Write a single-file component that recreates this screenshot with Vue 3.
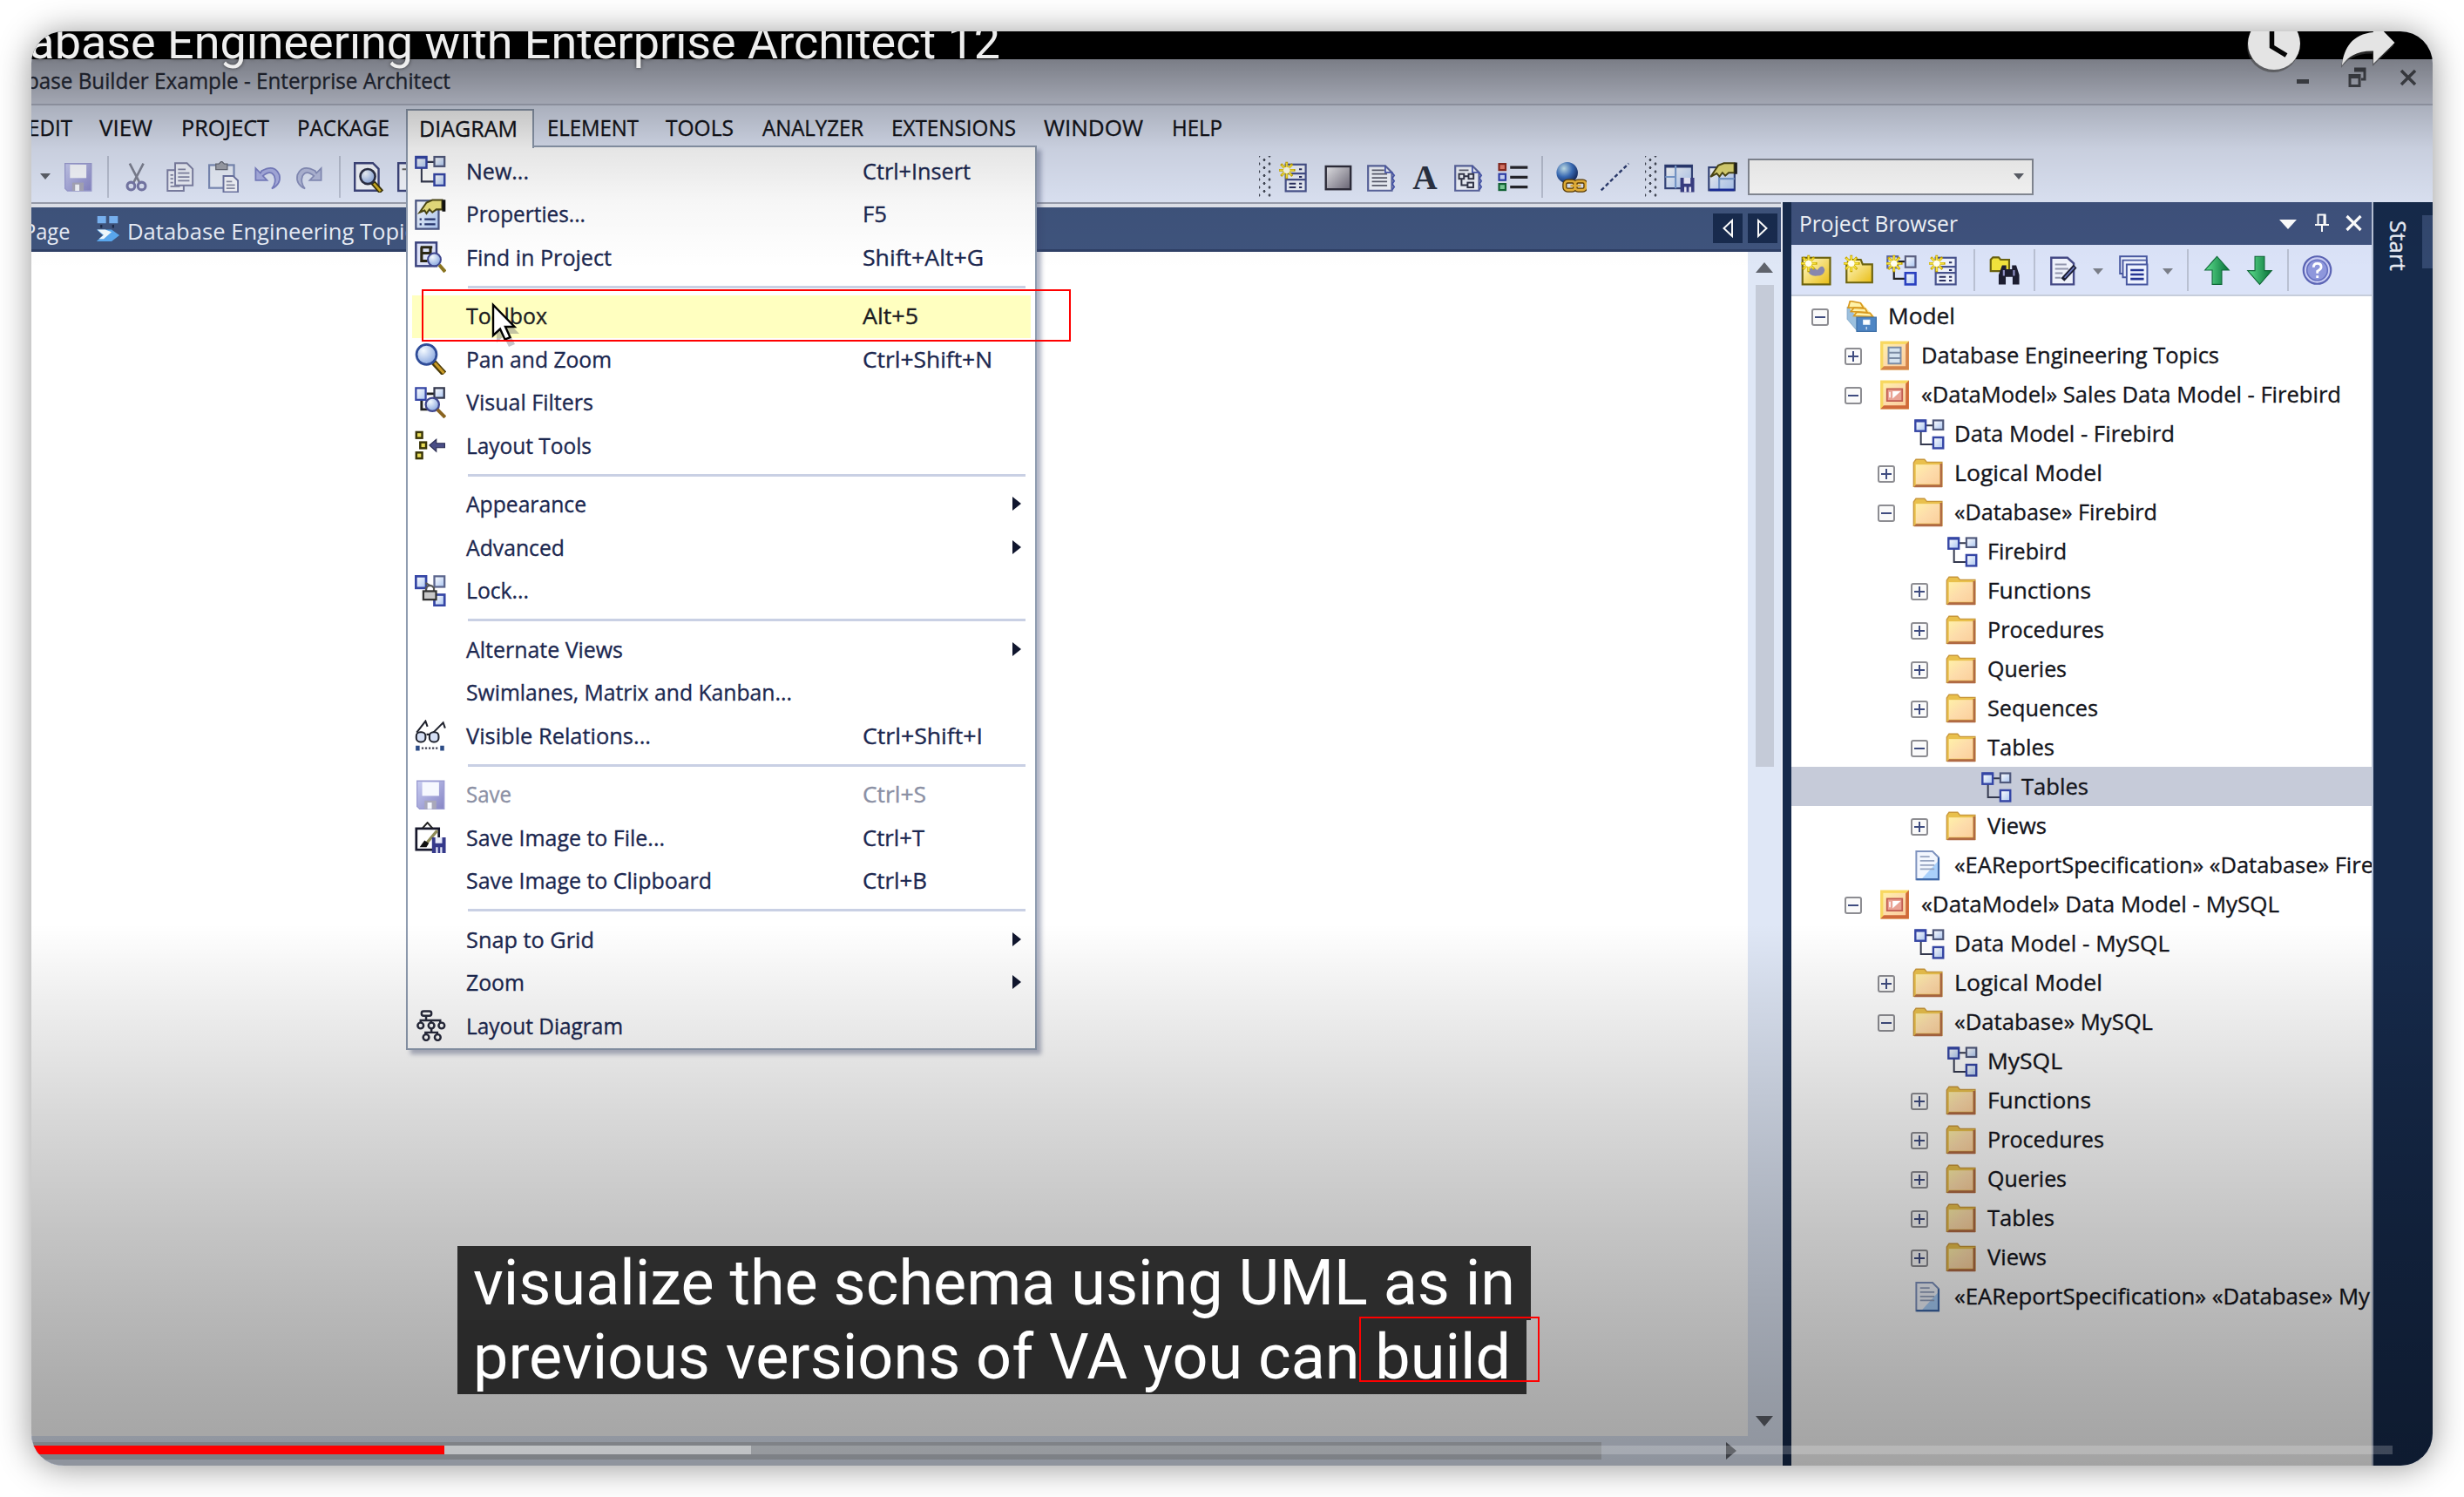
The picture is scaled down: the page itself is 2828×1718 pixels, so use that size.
<script setup>
const vFit = {
  mounted(el, { value }) {
    if (!value) return
    const w = el.getBoundingClientRect().width
    el.style.transform = `scaleX(${value / w})`
  },
}

const menus = [
  { t: 'EDIT', cell: 82, w: 51 },
  { t: 'VIEW', cell: 94, w: 61 },
  { t: 'PROJECT', cell: 133, w: 101 },
  { t: 'PACKAGE', cell: 139, w: 106 },
  { t: 'DIAGRAM', cell: 147, w: 113 },
  { t: 'ELEMENT', cell: 136, w: 105 },
  { t: 'TOOLS', cell: 111, w: 78 },
  { t: 'ANALYZER', cell: 148, w: 116 },
  { t: 'EXTENSIONS', cell: 175, w: 143 },
  { t: 'WINDOW', cell: 147, w: 114 },
  { t: 'HELP', cell: 90, w: 58 },
]

const items = [
  { t: 'New...', w: 72, k: 'Ctrl+Insert', kw: 124, icon: 'diagram' },
  { t: 'Properties...', w: 137, k: 'F5', kw: 28, icon: 'props' },
  { t: 'Find in Project', w: 167, k: 'Shift+Alt+G', kw: 139, icon: 'findproj' },
  { sep: true },
  { t: 'Toolbox', w: 93, k: 'Alt+5', kw: 64, hot: true },
  { t: 'Pan and Zoom', w: 167, k: 'Ctrl+Shift+N', kw: 149, icon: 'zoom' },
  { t: 'Visual Filters', w: 146, icon: 'filters' },
  { t: 'Layout Tools', w: 144, icon: 'align' },
  { sep: true },
  { t: 'Appearance', w: 138, sub: true },
  { t: 'Advanced', w: 113, sub: true },
  { t: 'Lock...', w: 72, icon: 'lock' },
  { sep: true },
  { t: 'Alternate Views', w: 180, sub: true },
  { t: 'Swimlanes, Matrix and Kanban...', w: 374 },
  { t: 'Visible Relations...', w: 212, k: 'Ctrl+Shift+I', kw: 138, icon: 'glasses' },
  { sep: true },
  { t: 'Save', w: 52, k: 'Ctrl+S', kw: 73, icon: 'save', off: true },
  { t: 'Save Image to File...', w: 228, k: 'Ctrl+T', kw: 71, icon: 'saveimg' },
  { t: 'Save Image to Clipboard', w: 282, k: 'Ctrl+B', kw: 74 },
  { sep: true },
  { t: 'Snap to Grid', w: 147, sub: true },
  { t: 'Zoom', w: 67, sub: true },
  { t: 'Layout Diagram', w: 180, icon: 'layout' },
]

const tree = [
  { l: 0, x: '-', icon: 'model', t: 'Model', w: 77 },
  { l: 1, x: '+', icon: 'pkgdoc', t: 'Database Engineering Topics', w: 342 },
  { l: 1, x: '-', icon: 'pkgmodel', t: '«DataModel» Sales Data Model - Firebird', w: 482 },
  { l: 2, icon: 'diagram', t: 'Data Model - Firebird', w: 253 },
  { l: 2, x: '+', icon: 'folder', t: 'Logical Model', w: 170 },
  { l: 2, x: '-', icon: 'folder', t: '«Database» Firebird', w: 233 },
  { l: 3, icon: 'diagram', t: 'Firebird', w: 91 },
  { l: 3, x: '+', icon: 'folder', t: 'Functions', w: 119 },
  { l: 3, x: '+', icon: 'folder', t: 'Procedures', w: 134 },
  { l: 3, x: '+', icon: 'folder', t: 'Queries', w: 91 },
  { l: 3, x: '+', icon: 'folder', t: 'Sequences', w: 127 },
  { l: 3, x: '-', icon: 'folder', t: 'Tables', w: 77 },
  { l: 4, icon: 'diagram', t: 'Tables', w: 77, on: true },
  { l: 3, x: '+', icon: 'folder', t: 'Views', w: 68 },
  { l: 2, icon: 'report', t: '«EAReportSpecification» «Database» Fire', w: 481 },
  { l: 1, x: '-', icon: 'pkgmodel', t: '«DataModel» Data Model - MySQL', w: 411 },
  { l: 2, icon: 'diagram', t: 'Data Model - MySQL', w: 247 },
  { l: 2, x: '+', icon: 'folder', t: 'Logical Model', w: 170 },
  { l: 2, x: '-', icon: 'folder', t: '«Database» MySQL', w: 228 },
  { l: 3, icon: 'diagram', t: 'MySQL', w: 86 },
  { l: 3, x: '+', icon: 'folder', t: 'Functions', w: 119 },
  { l: 3, x: '+', icon: 'folder', t: 'Procedures', w: 134 },
  { l: 3, x: '+', icon: 'folder', t: 'Queries', w: 91 },
  { l: 3, x: '+', icon: 'folder', t: 'Tables', w: 77 },
  { l: 3, x: '+', icon: 'folder', t: 'Views', w: 68 },
  { l: 2, icon: 'report', t: '«EAReportSpecification» «Database» My', w: 477 },
]
const leftTools = ['save', '|', 'cut', 'copy', 'paste', 'undo', 'redo', '|', 'preview', 'page']
const midTools = ['newel', 'shade', 'textdoc', 'letter', 'diagdoc', 'legend', '|', 'globe', 'dashline']
const panelTools = ['newmodel', 'newfolder', 'newdiagram', 'newel', '|', 'find', '|', 'editdoc', 'v', 'stack', 'v', '|', 'up', 'down', '|', 'help']
</script>

<template>
  <svg class="defs" width="0" height="0">
    <defs>
      <linearGradient id="gb" x1="0" y1="0" x2="1" y2="1"><stop offset="0" stop-color="#fff" /><stop offset="1" stop-color="#a9c4f0" /></linearGradient>
      <linearGradient id="gf" x1="0" y1="0" x2="1" y2="1"><stop offset="0" stop-color="#fff0a8" /><stop offset=".5" stop-color="#fddcab" /><stop offset="1" stop-color="#fbcf9c" /></linearGradient>
      <linearGradient id="gy" x1="0" y1="0" x2="1" y2="1"><stop offset="0" stop-color="#fffbd0" /><stop offset="1" stop-color="#e9bd14" /></linearGradient>
      <linearGradient id="gs" x1="0" y1="0" x2="1" y2="1"><stop offset="0" stop-color="#f0f0f4" /><stop offset="1" stop-color="#6c6878" /></linearGradient>
      <linearGradient id="gd" x1="0" y1="0" x2="1" y2="1"><stop offset="0" stop-color="#c9cdf2" /><stop offset="1" stop-color="#8685c4" /></linearGradient>
      <linearGradient id="gg" x1="0" y1="0" x2="1" y2="0"><stop offset="0" stop-color="#5fe08f" /><stop offset="1" stop-color="#067038" /></linearGradient>
      <radialGradient id="gl" cx=".35" cy=".3" r=".8"><stop offset="0" stop-color="#f4faff" /><stop offset="1" stop-color="#7f9fdc" /></radialGradient>
      <radialGradient id="ge" cx=".35" cy=".3" r=".8"><stop offset="0" stop-color="#c8e8f4" /><stop offset=".5" stop-color="#3b6fbe" /><stop offset="1" stop-color="#0c1a4c" /></radialGradient>
    </defs>
    <symbol id="star" viewBox="0 0 16 16">
      <path d="M4 0v9M-.5 4.5h9M1 1.300l6 6.200M7 1.300l-6 6.200" stroke="#c9a800" stroke-width="1.300" />
      <path d="M4 .6v7.800M.2 4.500h7.600M1.400 1.800l5.200 5.400M6.600 1.800l-5.200 5.400" stroke="#f5e13a" stroke-width=".8" />
      <circle cx="4" cy="4.500" r="1.700" fill="#fffef0" />
    </symbol>
    <symbol id="diagram" viewBox="0 0 16 16">
      <path d="M6 3.500h4M3.500 6.500v7h7" fill="none" stroke="#33384e" stroke-width=".9" />
      <rect x=".6" y=".9" width="5.400" height="5.600" fill="url(#gb)" stroke="#3546a5" stroke-width="1.100" />
      <path d="M.6 1.200h5.400" stroke="#3546a5" stroke-width="1.300" />
      <rect x="10" y=".9" width="5.200" height="4.800" fill="url(#gb)" stroke="#50597c" stroke-width="1" />
      <rect x="10" y="9.800" width="5.200" height="5.700" fill="url(#gb)" stroke="#3546a5" stroke-width="1.100" />
    </symbol>
    <symbol id="props" viewBox="0 0 16 16">
      <rect x=".6" y="1" width="11.600" height="14.400" fill="url(#gb)" stroke="#4a5684" stroke-width="1" />
      <path d="M2.500 10.500h1M5 10.500h5.500M2.500 13h1M5 13h5.500" stroke="#24336c" stroke-width="1" />
      <path d="M2.500 7l3.500-5 3-1.300h5v4.800h-3l-2 1.500-1.500-1.500-1.500 2-1-1.500z" fill="#e6dd7c" stroke="#4c4714" stroke-width=".9" />
      <path d="M14 .5h1.700v6h-1.700z" fill="#111" />
    </symbol>
    <symbol id="findproj" viewBox="0 0 16 16">
      <rect x=".6" y=".6" width="10.500" height="12" fill="#dfe4fa" stroke="#3a427e" stroke-width="1.100" />
      <path d="M3 3h6M3.500 3v7h3M3.500 6h4.500v-2.500" fill="none" stroke="#2b2714" stroke-width="1.400" />
      <circle cx="10" cy="9.300" r="3.300" fill="url(#gl)" stroke="#3f478e" stroke-width=".9" />
      <path d="M12.500 12l3 3.500" stroke="#8a7420" stroke-width="1.800" />
    </symbol>
    <symbol id="zoom" viewBox="0 0 16 16">
      <path d="M9.500 9.500l5.500 6" stroke="#4a3a08" stroke-width="3" /><path d="M10.200 10l4.700 5.200" stroke="#c99a28" stroke-width="1.400" />
      <circle cx="6" cy="5.700" r="5.100" fill="url(#gl)" stroke="#2f4c98" stroke-width="1.200" />
    </symbol>
    <symbol id="filters" viewBox="0 0 16 16">
      <path d="M6 3.500h4M3.500 6.500v5h4" fill="none" stroke="#222" stroke-width="1.300" />
      <rect x=".6" y=".6" width="5" height="6" fill="url(#gb)" stroke="#3546a5" stroke-width="1" />
      <rect x="10" y=".6" width="5" height="5" fill="url(#gb)" stroke="#33384e" stroke-width="1" />
      <circle cx="9" cy="9" r="3.400" fill="url(#gl)" stroke="#3f478e" stroke-width="1" />
      <path d="M11.500 11.500l4 4" stroke="#8a6420" stroke-width="1.800" />
    </symbol>
    <symbol id="align" viewBox="0 0 16 16">
      <g fill="#e8dc58" stroke="#3a3608" stroke-width="1.100"><rect x=".8" y="1.300" width="3" height="3" /><rect x="2.800" y="6.500" width="3" height="3" /><rect x=".8" y="11.700" width="3" height="3" /></g>
      <path d="M7.500 8l3.500-3v2h4.300v2.200h-4.300v2z" fill="#4a4e86" stroke="#2b2d52" stroke-width=".5" />
    </symbol>
    <symbol id="lock" viewBox="0 0 16 16">
      <rect x=".6" y=".6" width="5.200" height="6" fill="url(#gb)" stroke="#3546a5" stroke-width="1.200" />
      <rect x="10" y=".6" width="5.200" height="5.400" fill="url(#gb)" stroke="#5a648c" stroke-width="1" />
      <rect x="10" y="10" width="5.200" height="5.500" fill="url(#gb)" stroke="#3546a5" stroke-width="1.200" />
      <path d="M5.500 4l2.500 1.500M5.800 8.500V6.500q2-2.500 4 0v2" fill="none" stroke="#555" stroke-width="1" />
      <rect x="4.400" y="8.200" width="6.500" height="4.300" fill="#c8c8c8" stroke="#333" stroke-width="1" />
    </symbol>
    <symbol id="glasses" viewBox="0 0 16 16">
      <g fill="none" stroke="#20232e" stroke-width=".9"><path d="M1 6.500L5.500.7l1 2.800M9.500 6.500L14.500 1.500l1 2.800M6 7.500h2.500" />
      <rect x=".8" y="6.300" width="4.700" height="5" rx="2" fill="#d5dff5" /><rect x="7.500" y="6.300" width="4.700" height="5" rx="2" fill="#d5dff5" /></g>
      <path d="M.5 14.500h2M13 14.500h2" stroke="#2c4c86" stroke-width="2.600" /><path d="M3.500 14.500h9" stroke="#445" stroke-width=".9" stroke-dasharray="1 .8" />
    </symbol>
    <symbol id="save" viewBox="0 0 16 16">
      <path d="M1.200 1h13.800v14.300H2.500l-1.300-1.300z" fill="url(#gd)" stroke="#9c9dd2" stroke-width=".6" />
      <rect x="3.800" y="1.600" width="8.600" height="7" fill="#f6f8fe" /><rect x="5" y="11" width="6" height="4.300" fill="#a9a8ba" /><rect x="6.500" y="12" width="2.200" height="3.300" fill="#f6f8fe" />
    </symbol>
    <symbol id="saveimg" viewBox="0 0 16 16">
      <rect x=".8" y="3.500" width="11.500" height="10.800" fill="#fff" stroke="#17182c" stroke-width="1.200" />
      <path d="M4 3.300l2.500-2.800 2.500 2.800" fill="none" stroke="#222" stroke-width=".9" />
      <path d="M11.500 4.500L6 11" stroke="#8d8a58" stroke-width="1.500" /><path d="M2.500 13l2.500-3.500 2.200 1.500-1.200 2z" fill="#111" />
      <path d="M8.800 8h7v8h-7z" fill="#35398a" /><path d="M10.500 8h3.500v3h-3.500zM10.800 13h1v3h-1zM13 13h1v3h-1z" fill="#e8ebfa" />
    </symbol>
    <symbol id="layout" viewBox="0 0 16 16">
      <g fill="#fff" stroke="#272a3c" stroke-width="1.100"><path d="M5.800 3v2.300h2.500V8M3 7.500V5.300h10v2.200M8.500 9.500v2H5.500v2M8.500 11.500h3v2" fill="none" />
      <rect x="3.500" y=".7" width="5" height="2.300" rx="1" /><circle cx="3" cy="8" r="1.500" /><circle cx="8.500" cy="8" r="1.500" /><circle cx="13.700" cy="8" r="1.500" /><circle cx="5.800" cy="14" r="1.500" /><circle cx="11.700" cy="14" r="1.500" /></g>
    </symbol>
    <symbol id="cut" viewBox="0 0 16 16">
      <path d="M4.500 1l5.200 10M11.700 1l-5.200 10" stroke="#7e8293" stroke-width="1.200" />
      <circle cx="5.200" cy="12.800" r="2" fill="none" stroke="#7779a8" stroke-width="1.400" /><circle cx="10.800" cy="12.800" r="2" fill="none" stroke="#7779a8" stroke-width="1.400" />
    </symbol>
    <symbol id="copy" viewBox="0 0 16 16">
      <g fill="#eef1fa" stroke="#7d80a4" stroke-width=".9"><path d="M1.500 4.500h8.500v10.800H1.500z" /><path d="M5.500.8h6.200l3 3V12.500H5.500z" /></g>
      <path d="M7 4h4M7 6h6M7 8h6M7 10h6M3 7h1.500M3 9h1.500M3 11h1.500M3 13h5" stroke="#8285a4" stroke-width=".8" />
    </symbol>
    <symbol id="paste" viewBox="0 0 16 16">
      <rect x=".5" y="1.800" width="13" height="12" fill="#e9effa" stroke="#7c8cb8" stroke-width="1" /><path d="M4 1.200h1.500L7-.2 8.500 1.200H10v3H4z" fill="#9fa2ac" stroke="#666a78" stroke-width=".6" />
      <path d="M8 7.500h5l2.600 2.500v6H8z" fill="#f6f8fe" stroke="#6e76a4" stroke-width=".9" /><path d="M9.500 10.500h3M9.500 12.300h4.500M9.500 14h4.500" stroke="#8b8fa8" stroke-width=".8" />
    </symbol>
    <symbol id="undo" viewBox="0 0 16 16">
      <path d="M2 3.500v6.300h6L5.800 7.500q4-3.500 6 0 1.300 3.500-1.300 6.700 5-2.500 4-7.200-2.500-6-9.300-2.200L4.500 6z" fill="#aab0e4" stroke="#7a80c4" stroke-width=".8" />
    </symbol>
    <symbol id="redo" viewBox="0 0 16 16">
      <path d="M14 3.500v6.300H8l2.200-2.300q-4-3.500-6 0-1.300 3.500 1.300 6.700-5-2.500-4-7.200 2.500-6 9.300-2.200L11.500 6z" fill="#b4bbdc" stroke="#8890bc" stroke-width=".8" />
    </symbol>
    <symbol id="preview" viewBox="0 0 16 16">
      <path d="M1 .8h9.500l3 3v11.400H1z" fill="#f3f6fd" stroke="#3d457c" stroke-width="1.100" /><path d="M10.500 11l4.500 5" stroke="#3a3208" stroke-width="2.800" /><path d="M11 11.500l3.500 4" stroke="#d1b023" stroke-width="1.200" />
      <circle cx="7.800" cy="7.800" r="3.900" fill="url(#gl)" stroke="#2b2f45" stroke-width="1.200" />
    </symbol>
    <symbol id="page" viewBox="0 0 16 16"><rect x="1" y=".8" width="13" height="14.500" fill="#f3f6fd" stroke="#3d457c" stroke-width="1.100" /><path d="M3 4h9" stroke="#666" /></symbol>
    <symbol id="newel" viewBox="0 0 16 16">
      <rect x="3.500" y="1.500" width="10.500" height="14" fill="#eef2fb" stroke="#47528c" stroke-width="1" /><path d="M3.500 6.200H14M3.500 9.400H14" stroke="#47528c" stroke-width="1" />
      <path d="M5.300 11.500h3.500M5.300 13.500h3.500M10.500 11.500h1.500M10.500 13.500h1.500M10.500 4h1.500M10.500 8h1.500" stroke="#2a2f60" stroke-width=".9" />
      <use href="#star" width="16" height="16" />
    </symbol>
    <symbol id="shade" viewBox="0 0 16 16"><rect x="1.700" y="2.500" width="13" height="12" fill="url(#gs)" stroke="#2f2e3c" stroke-width="1.100" /></symbol>
    <symbol id="textdoc" viewBox="0 0 16 16">
      <path d="M1 2.200h9l3.500 3.500v9.500H1z" fill="#f1f5fd" stroke="#5b66a0" stroke-width="1" /><path d="M3 4.500h6.500M3 6.500h8M3 8.500h8M3 10.500h8M3 12.500h8" stroke="#5c5f70" stroke-width=".8" /><path d="M10 2.200v3.500h3.500l1.200 1.500-1 1.500 1 1.500-1 1.500 1 1.500-1 1.500" fill="none" stroke="#4a59b0" stroke-width=".8" />
    </symbol>
    <symbol id="diagdoc" viewBox="0 0 16 16">
      <path d="M1 2.200h9l3.500 3.500v9.500H1z" fill="#f1f5fd" stroke="#5b66a0" stroke-width="1" /><path d="M3 4.500h5" stroke="#5c5f70" stroke-width=".8" /><path d="M10 2.200v3.500h3.500l1.200 1.500-1 1.500 1 1.500-1 1.500 1 1.500-1 1.500" fill="none" stroke="#4a59b0" stroke-width=".8" />
      <g fill="none" stroke="#33364a" stroke-width=".9"><rect x="3" y="6.500" width="2.600" height="2.500" /><rect x="8" y="6.500" width="2.600" height="2.500" /><rect x="7.500" y="11" width="3" height="2.500" /><path d="M5.600 7.700H8M4.300 9v3.300h3.200" /></g>
    </symbol>
    <symbol id="letter" viewBox="0 0 16 16"><text x="8" y="14.500" text-anchor="middle" font-family="Liberation Serif, serif" font-weight="700" font-size="18" fill="#2b3243">A</text></symbol>
    <symbol id="legend" viewBox="0 0 16 16">
      <g stroke-width="1"><rect x=".7" y="1.200" width="3.400" height="3.200" fill="#e57a6a" stroke="#8c2a20" /><rect x=".7" y="6.500" width="3.400" height="3.200" fill="#cfdcff" stroke="#3040b0" /><rect x=".7" y="11.700" width="3.400" height="3.200" fill="#7cd09a" stroke="#146838" /></g>
      <path d="M6.500 3h9.200M6.500 8.200h9.200M6.500 13.300h9.200" stroke="#26262c" stroke-width="1.500" />
    </symbol>
    <symbol id="globe" viewBox="0 0 16 16">
      <circle cx="5.800" cy="5.800" r="5.600" fill="url(#ge)" /><g fill="none" stroke="#5c3c04" stroke-width="2.400"><rect x="4.500" y="10.300" width="5.500" height="4.600" rx="1.500" /><rect x="10" y="10.300" width="5.500" height="4.600" rx="1.500" /></g><g fill="none" stroke="#eab43a" stroke-width="1.200"><rect x="4.500" y="10.300" width="5.500" height="4.600" rx="1.500" /><rect x="10" y="10.300" width="5.500" height="4.600" rx="1.500" /><path d="M7.500 12.600h5.500" /></g>
    </symbol>
    <symbol id="dashline" viewBox="0 0 16 16"><path d="M.8 15L15.200 1" stroke="#2c3c70" stroke-width="1.100" stroke-dasharray="2 1.300" /></symbol>
    <symbol id="savelay" viewBox="0 0 16 16">
      <rect x=".6" y="2" width="14" height="12" fill="url(#gb)" stroke="#35457c" stroke-width="1" /><path d="M.6 2.500h14" stroke="#2a3a72" stroke-width="1.400" /><path d="M6 2v12M.6 8H6" stroke="#7a9cd0" stroke-width="1" /><path d="M8.500 8.500h7.300V16H8.500z" fill="#3a3f86" /><path d="M10.300 8.500h3.500v3h-3.500zM10.500 13.300h1.200V16h-1.200zM13 13.300h1.200V16H13z" fill="#eef" />
    </symbol>
    <symbol id="editlay" viewBox="0 0 16 16">
      <rect x=".6" y="3" width="13.500" height="12" fill="url(#gb)" stroke="#35457c" stroke-width="1" /><path d="M6 3v12M6 9h8" stroke="#7a9cd0" stroke-width="1" /><path d="M1 14.800h13" stroke="#1a2c9c" stroke-width="1.300" />
      <path d="M1.500 8l4-6 3-1.200h5.500v5h-3l-1.800 1.600-1.500-1.600-1.500 2-1.500-1.600z" fill="#dfd774" stroke="#4c4714" stroke-width=".9" /><path d="M14 .5h1.500v6H14z" fill="#222" />
    </symbol>
    <symbol id="newmodel" viewBox="0 0 16 16"><rect x=".8" y="1.500" width="14.500" height="14" fill="url(#gy)" stroke="#6e6410" stroke-width="1" /><path d="M3.500 8q3-2.500 5 0 3-4 4 0-.5 3-4 3-4 .5-5-3z" fill="#8787ae" /><use href="#star" width="16" height="16" /></symbol>
    <symbol id="newfolder" viewBox="0 0 16 16"><path d="M1.500 14.500V4.500l2-2h5.500l1 2.500h5v9.500z" fill="url(#gy)" stroke="#6e6410" stroke-width="1" /><use href="#star" width="16" height="16" /></symbol>
    <symbol id="newdiagram" viewBox="0 0 16 16">
      <path d="M6 3.500h4M4 6.500v6h7" fill="none" stroke="#222" stroke-width="1" /><rect x=".6" y=".8" width="5.400" height="6" fill="#cfd8f4" stroke="#5a64a0" stroke-width="1" /><rect x="10" y=".8" width="5.300" height="5.700" fill="url(#gb)" stroke="#5a5f80" stroke-width="1" /><rect x="10" y="9.500" width="5.300" height="6" fill="url(#gb)" stroke="#2a41c0" stroke-width="1.200" /><use href="#star" width="16" height="16" />
    </symbol>
    <symbol id="find" viewBox="0 0 16 16"><path d="M.8 8.500V2.500L2 1.300h3l1 1.200h4.500v6z" fill="#f0e23c" stroke="#6a6210" stroke-width="1" /><path d="M5 15.500V10.500l1.800-5h2.200v2h3v-2h2.200l1.600 5v5h-3.500v-4h-3.600v4z" fill="#1c1d30" /><path d="M7.700 8v3M13 8v3" stroke="#8f90c4" stroke-width="1" /></symbol>
    <symbol id="editdoc" viewBox="0 0 16 16"><path d="M1.500 1.500H10l3.300 3v11H1.500z" fill="#eef1fb" stroke="#454a86" stroke-width="1.100" /><path d="M3.500 5h6M3.500 7.300h7M3.500 9.600h4M3.500 12h3" stroke="#9195ac" stroke-width=".9" /><path d="M14 6L7.500 13" stroke="#1a1c30" stroke-width="2.400" /><path d="M13.600 6.500L8.500 12" stroke="#6c7ac0" stroke-width=".8" /></symbol>
    <symbol id="stack" viewBox="0 0 16 16"><g fill="#eef3ff" stroke="#4858a0" stroke-width=".9"><path d="M1 .8h14v9H1z" /><path d="M2.500 2.800h12.500v9H2.500z" /><path d="M4.500 5h10.800v10.500H4.500z" /></g><path d="M6.500 8h7M6.500 10.300h7M6.500 12.600h7" stroke="#243494" stroke-width="1.200" /></symbol>
    <symbol id="up" viewBox="0 0 16 16"><path d="M8 .8l6.300 7.200h-3.800v7.500h-5V8H1.700z" fill="url(#gg)" stroke="#116838" stroke-width=".5" /></symbol>
    <symbol id="down" viewBox="0 0 16 16"><path d="M8 15.500l6.300-7.200h-3.800V.8h-5v7.500H1.700z" fill="url(#gg)" stroke="#116838" stroke-width=".5" /></symbol>
    <symbol id="help" viewBox="0 0 16 16"><circle cx="8" cy="8" r="7.200" fill="#c9cdf4" stroke="#5b64b4" stroke-width="1" /><circle cx="8" cy="8" r="5.400" fill="#8e97dc" stroke="#6670c0" stroke-width=".7" /><path d="M6.100 6.500q0-2 2-2t2 1.800q0 1.200-2 2.300v1.100M8.100 10.800v1.300" fill="none" stroke="#fff" stroke-width="1.300" /></symbol>
    <symbol id="model" viewBox="0 0 16 16"><path d="M.5 3L8 1l7 7.500-8 1z" fill="#fbe9a0" /><path d="M.5 3v6.500l5.500 6.500V9z" fill="#9cc0de" stroke="#7fa6c8" stroke-width=".4" /><g fill="#fff2a8" stroke="#d89a20" stroke-width=".8"><path d="M1 3.500l1-3.500 5.500 1L9 3.500z" /><path d="M2.500 5.500l1.500-2 6 .5 1 2z" /><path d="M4 7.800l1.500-2 7 .5 1.500 2z" /></g><path d="M5.500 8.500h10.200V16H5.500z" fill="#4f86c4" stroke="#3e70a8" stroke-width=".6" /><path d="M9 10h3.300v2.200H9zM10.600 13.500v1.500" fill="#fff" stroke="#e8f2fc" stroke-width=".5" /></symbol>
    <symbol id="pkgdoc" viewBox="0 0 16 16"><path d="M.5.500h15v15H.5z" fill="#f8d860" /><path d="M15.500.5v15H.5L2.500 13.500h11V2.500z" fill="#d4844a" /><path d="M2 2h11.800v11.600H2z" fill="url(#gf)" /><g fill="#d5e3ef" stroke="#7b8ca4" stroke-width=".9"><path d="M4.800 3.800h6.400v8.400H4.800zM4.800 6.500h6.400M4.800 9.400h6.400" /></g></symbol>
    <symbol id="pkgmodel" viewBox="0 0 16 16"><path d="M.5.500h15v15H.5z" fill="#f8d860" /><path d="M15.500.5v15H.5L2.500 13.500h11V2.500z" fill="#d06a3a" /><path d="M2 2h11.800v11.600H2z" fill="url(#gf)" /><path d="M4 5h8v6.300H4z" fill="#e9a294" stroke="#c05c50" stroke-width=".8" /><path d="M5.500 6.500v3M7.300 6.500h3l-3 2.800z" fill="#fff" stroke="#fff" stroke-width=".7" /></symbol>
    <symbol id="folder" viewBox="0 0 16 16"><path d="M.6 15V2.500L1.800.8h4.500L7.500 2.200h8V15z" fill="#e9c04c" stroke="#c8963a" stroke-width=".6" /><path d="M15.600 3v12.400H.8l1-1.400h12.600V3z" fill="#b06a44" /><path d="M1.700 3.500h12.600v10.300H1.700z" fill="url(#gf)" /></symbol>
    <symbol id="report" viewBox="0 0 16 16"><path d="M2 .7h8.500l3.200 3.200v11.500H2z" fill="#f2f6fe" stroke="#7f93bf" stroke-width=".9" /><path d="M13.200 6v9H5z" fill="#a9d0fb" /><path d="M4 3.500h5M4 5.700h7.500M4 7.900h7.500M4 10h7.500" stroke="#95a3c0" stroke-width=".8" /><path d="M13.700 4v11.400H2" fill="none" stroke="#3f68a8" stroke-width="1" /></symbol>
    <symbol id="tabflow" viewBox="0 0 16 16"><path d="M1.500 0h5.500v4.500H1.500zM9 0h5.500v4.500H9z" fill="#79b4f4" /><path d="M4 5.500v2M11.500 5.500v2" stroke="#1c2a48" stroke-width="1.200" /><path d="M1 8.500h9.500l5 3.700-5 3.800H1l4-3.800z" fill="#5aa9f0" /><path d="M1.500 8.500h5l4 1.500-5 4.500H2.500L5.500 12z" fill="#f2fbff" /></symbol>
  </svg>

  <main class="frame">
    <div class="letterbox"></div>
    <header class="titlebar">
      <span v-fit="487" class="txt">base Builder Example - Enterprise Architect</span>
      <svg class="winbtns" width="160" height="40" viewBox="0 0 160 40" fill="none" stroke="#54575f">
        <path d="M13 22.500h14" stroke-width="5" /><path d="M79 8h12v12h-4M79 10h12" stroke-width="3" /><path d="M74 15.500h11v12H74zM74 17.500h11" stroke-width="3" /><path d="M133 10l16 16M149 10l-16 16" stroke-width="3.500" />
      </svg>
    </header>
    <nav class="menubar">
      <div v-for="m in menus" :key="m.t" class="mcell" :class="{ open: m.t === 'DIAGRAM' }" :style="{ width: m.cell + 'px' }"><span v-fit="m.w" class="txt">{{ m.t }}</span></div>
    </nav>
    <div class="toolbar">
      <div class="group first">
        <i class="caret"></i>
        <template v-for="(t, i) in leftTools" :key="i"><i v-if="t === '|'" class="bar"></i><span v-else class="tool"><svg><use :href="'#' + t" /></svg></span></template>
      </div>
      <div class="group">
        <i class="grip"></i>
        <template v-for="(t, i) in midTools" :key="i"><i v-if="t === '|'" class="bar"></i><span v-else class="tool"><svg><use :href="'#' + t" /></svg></span></template>
      </div>
      <div class="group last">
        <i class="grip"></i>
        <span class="tool"><svg><use href="#savelay" /></svg></span><span class="tool"><svg><use href="#editlay" /></svg></span>
        <div class="combo"><i class="caret"></i></div>
      </div>
    </div>
    <div class="work">
      <section class="editor">
        <div class="tabs">
          <span v-fit="50" class="txt page">Page</span>
          <svg class="tabicon"><use href="#tabflow" /></svg>
          <span v-fit="343" class="txt">Database Engineering Topics</span>
          <div class="nav">
            <span><svg width="34" height="34" fill="none" stroke="#fff" stroke-width="2"><path d="M22 8v18L12.500 17z" /></svg></span>
            <span><svg width="34" height="34" fill="none" stroke="#fff" stroke-width="2"><path d="M12 8v18l9.500-9z" /></svg></span>
          </div>
        </div>
        <div class="canvasrow">
          <div class="canvas"></div>
          <div class="vscroll"><i class="aup"></i><i class="vthumb"></i><i class="adown"></i></div>
        </div>
        <div class="hscroll"><i class="hthumb"></i><i class="aright"></i></div>
      </section>
      <section class="panel">
        <div class="phead">
          <span v-fit="182" class="txt">Project Browser</span>
          <svg width="110" height="30" viewBox="0 0 110 30" fill="none" stroke="#fff"><path d="M4 10h20L14 21z" fill="#fff" stroke="none" /><path d="M48.500 16V4.500h8V16M45 16h16M53 16v8" stroke-width="2" /><path d="M56 4.500V16" stroke-width="3" /><path d="M81.500 6l16 16M97.500 6l-16 16" stroke-width="3.200" /></svg>
        </div>
        <div class="ptools">
          <template v-for="(t, i) in panelTools" :key="i"><i v-if="t === '|'" class="bar"></i><i v-else-if="t === 'v'" class="caret"></i><span v-else class="tool"><svg><use :href="'#' + t" /></svg></span></template>
        </div>
        <div class="tree">
          <div v-for="(n, i) in tree" :key="i" class="node" :class="{ on: n.on }" :style="{ paddingLeft: 22.5 + n.l * 38.3 + 'px' }">
            <i class="exp" :class="{ none: !n.x, plus: n.x === '+' }"></i>
            <svg :class="n.icon"><use :href="'#' + n.icon" /></svg>
            <span v-fit="n.w" class="txt">{{ n.t }}</span>
          </div>
        </div>
      </section>
      <aside class="dock"><span class="txt">Start</span><i></i></aside>
    </div>

    <div class="menu">
      <template v-for="(m, i) in items" :key="i">
        <div v-if="m.sep" class="sep"></div>
        <div v-else class="row" :class="{ hot: m.hot, off: m.off }">
          <svg><use v-if="m.icon" :href="'#' + m.icon" /></svg>
          <span class="label"><span v-fit="m.w" class="txt">{{ m.t }}</span></span>
          <span v-if="m.k" v-fit="m.kw" class="txt">{{ m.k }}</span>
          <i v-if="m.sub" class="more"></i>
        </div>
      </template>
    </div>
    <div class="shade top"></div>
    <div class="shade bottom"></div>
    <svg class="cursor" width="40" height="52" viewBox="0 0 40 52"><path d="M6 8v37l8-7 6 12 7-3-6-12h11z" fill="#556" opacity=".35" /><path d="M2 2v35l8-7.500 5.500 12 6-2.500-5.500-12h10.500z" fill="#fff" stroke="#000" stroke-width="2.400" /></svg>

    <div v-fit="1197" class="vtitle">Database Engineering with Enterprise Architect 12</div>
    <svg class="vbtns" width="150" height="80" viewBox="2570 36 150 80">
      <g fill="#444" opacity=".6" transform="translate(-1 3)"><circle cx="2610" cy="50" r="30" /><path d="M2724 24l24.500 25-24.500 24V58.500C2705 58 2695 65 2688 75c2-20 12-36 36-38z" /></g>
      <circle cx="2610" cy="50" r="30" fill="#e4e4e4" /><path d="M2607.500 30v23.500l16.500 10" fill="none" stroke="#050505" stroke-width="5.500" />
      <path d="M2724 24l24.500 25-24.500 24V58.500C2705 58 2695 65 2688 75c2-20 12-36 36-38z" fill="#e4e4e4" />
    </svg>
    <div class="progress"><i class="played"></i><i class="loaded"></i></div>
    <div class="caption">
      <div class="c1"><span v-fit="1196">visualize the schema using UML as in</span></div>
      <div class="c2"><span v-fit="1191">previous versions of VA you can build</span></div>
    </div>
    <div class="mark m1"></div>
    <div class="mark m2"></div>
  </main>
</template>

<style>
body { background: #fff; overflow: hidden; }
</style>

<style scoped>
* { box-sizing: border-box; }
i { display: block; flex: none; }
svg { flex: none; overflow: visible; }
.defs { position: absolute; }
.frame { position: relative; display: flex; flex-direction: column; width: 2756px; height: 1646px; margin: 36px; border-radius: 37px; overflow: hidden; background: #dfe6f7; font: 25.5px/1 "Open Sans", "Noto Sans", sans-serif; color: #14151c; box-shadow: 0 2px 38px rgba(0, 0, 0, .42); }
.txt { display: inline-block; white-space: pre; transform-origin: 0 50%; line-height: 34px; flex: none; -webkit-text-stroke: .35px currentColor; }
.letterbox { height: 32px; background: #000; flex: none; }
.titlebar { height: 53px; flex: none; background: #d7dcec; border-bottom: 2px solid #b6bccd; display: flex; align-items: center; justify-content: space-between; padding: 0 0 5px 0; color: #2b3040; }
.titlebar .txt { margin: 2px 0 0 -6px; }
.winbtns { margin-right: 9px; }
.menubar { height: 54px; flex: none; display: flex; padding: 4px 0 0; }
.menubar .mcell:first-child { margin-left: -4px; }
.mcell { height: 43px; display: flex; align-items: center; padding-bottom: 1px; flex: none; }
.mcell.open { height: 45px; padding-bottom: 4px; background: #fff; border: 2px solid #8f9cb0; border-bottom: 0; margin: 0 15px 0 -14px; padding-left: 13px; position: relative; z-index: 3; }
.toolbar { height: 57px; flex: none; display: flex; align-items: center; padding-bottom: 2px; }
.group { display: flex; align-items: center; height: 50px; }
.first { width: 1409px; padding-left: 10px; }
.first > .caret { margin: 0 7px 0 0; }
.first .tool { width: 49.8px; }
.last { margin-left: 9px; }
.tool { width: 50.2px; height: 36px; display: flex; justify-content: center; flex: none; }
.tool svg { width: 35px; height: 36px; }
.bar { width: 17px; height: 48px; background: linear-gradient(#b9c0d2, #b9c0d2) 8px 0 / 2px 100% no-repeat; }
.caret { width: 0; height: 0; border: 6px solid transparent; border-top: 7px solid #5d616a; border-bottom: 0; }
.grip { width: 15px; height: 48px; background: radial-gradient(circle, #454a58 1.300px, transparent 1.700px) 0 0 / 12px 9px, radial-gradient(circle, #454a58 1.300px, transparent 1.700px) 6px 4.500px / 12px 9px; }
.combo { width: 328px; height: 42px; margin-left: 3px; background: #fafafa; border: 2px solid #868b96; display: flex; align-items: center; justify-content: flex-end; padding-right: 9px; }
.work { flex: 1; min-height: 0; display: flex; background: #162a4b; }
.editor { width: 2010px; flex: none; display: flex; flex-direction: column; background: #dfe6f7; border-right: 2px solid #e9eef8; }
.tabs { height: 57px; flex: none; border-top: 6px solid #e3e6ee; background: #3f547d; border-bottom: 3px solid #2e4066; display: flex; align-items: center; color: #e9eef8; position: relative; }
.tabs::before { content: ''; position: absolute; left: 0; right: 0; top: -6px; height: 2px; background: #9a9fae; }
.tabs .page { margin-left: -9px; width: 54px; margin-right: 28px; padding-top: 6px; }
.tabs .txt { padding-top: 6px; -webkit-text-stroke: 0; }
.tabicon { width: 29px; height: 29px; margin-right: 8px; }
.nav { margin-left: auto; display: flex; gap: 6px; margin-right: 4px; }
.nav span { width: 34px; height: 34px; background: #182b4e; display: block; }
.canvasrow { flex: 1; display: flex; min-height: 0; }
.canvas { flex: 1; background: #fff; }
.vscroll { width: 38px; display: flex; flex-direction: column; align-items: center; background: #dfe7f6; padding: 12px 0 11px; }
.aup { border: 10.500px solid transparent; border-bottom: 12px solid #5f636c; border-top: 0; }
.adown { border: 10.500px solid transparent; border-top: 12px solid #5f636c; border-bottom: 0; margin-top: auto; }
.vthumb { width: 21px; height: 553px; background: #c5cbd8; margin-top: 14px; }
.hscroll { height: 34px; flex: none; display: flex; align-items: center; background: #dfe7f6; }
.hthumb { width: 1802px; height: 20px; background: #c3c8d0; }
.aright { margin-left: 143px; border: 10.500px solid transparent; border-left: 12px solid #5f636c; border-right: 0; }
.panel { margin-left: 10px; width: 668px; flex: none; display: flex; flex-direction: column; background: #fff; border-right: 2px solid #b8c2d6; overflow: hidden; }
.phead { height: 49px; flex: none; background: #3f527d; color: #f2f5fa; display: flex; align-items: center; justify-content: space-between; padding: 0 0 0 9px; }
.phead .txt { margin-top: -1px; -webkit-text-stroke: 0; }
.ptools { height: 59px; flex: none; background: #dbe3f8; border-bottom: 2px solid #c6cddb; display: flex; align-items: center; padding-left: 4px; }
.ptools .tool { width: 49px; }
.ptools .bar { width: 19.500px; background-position: 9px 0; }
.ptools .bar ~ .bar { width: 19px; }
.ptools .caret { margin: 4px 10px 0 9px; border-top-color: #7a7e88; }
.ptools .caret ~ .bar { width: 17px; background-position: 7px 0; }
.ptools .caret ~ .caret { margin-right: 9px; }
.tree { flex: 1; }
.node { height: 45.020px; display: flex; align-items: center; white-space: nowrap; }
.node.on { background: #c6cbd9; }
.node svg { width: 35px; height: 36px; margin: 0 13px 0 20px; }
.node svg.diagram { margin: 0 11px 0 22px; }
.node .txt { margin-top: -1px; }
.exp { width: 20px; height: 20px; border: 2px solid #8d8d92; border-radius: 3px; margin-top: 3px; background: linear-gradient(#3f4c80, #3f4c80) center / 12px 2px no-repeat, #fafafa; }
.exp.plus { background: linear-gradient(#3f4c80, #3f4c80) center / 12px 2px no-repeat, linear-gradient(#3f4c80, #3f4c80) center / 2px 12px no-repeat, #fafafa; }
.exp.none { visibility: hidden; }
.dock { flex: 1; display: flex; align-items: flex-start; color: #e8ecf4; position: relative; }
.dock .txt { writing-mode: vertical-rl; font-size: 26px; line-height: 34px; margin: 21px 0 0 12px; }
.dock i { position: absolute; right: 0; top: 15px; width: 12px; height: 61px; background: #33486f; }
.menu { position: absolute; left: 430px; top: 131px; width: 724px; height: 1038px; background: #fff; border: 2px solid #8f9cb0; box-shadow: 5px 5px 5px rgba(60, 70, 110, .4); padding: 3px 5px; z-index: 2; color: #1c2850; }
.row { height: 49.500px; display: flex; align-items: center; padding-left: 3px; }
.row svg { width: 36px; height: 36px; margin: -1px 23px 0 0; }
.row > .txt { margin-top: -2px; }
.label { width: 455px; flex: none; display: block; height: 34px; margin-top: -2px; }
.row.hot { background: #ffffc0; color: #1c1c22; }
.row.off { color: #8b90a4; }
.sep { height: 18px; padding-top: 7px; margin: 0 6px 0 64px; }
.sep::before { content: ''; display: block; height: 3px; background: #c9d0e4; }
.more { border: 8px solid transparent; border-left: 10px solid #10162e; border-right: 0; margin: -2px 0 0 172px; }
.shade { position: absolute; left: 0; right: 0; z-index: 4; }
.top { top: 32px; height: 240px; background: linear-gradient(rgba(0, 0, 0, .43), rgba(0, 0, 0, .24) 22%, rgba(0, 0, 0, .1) 43%, rgba(0, 0, 0, .035) 68%, transparent); }
.bottom { bottom: 0; height: 622px; background: linear-gradient(transparent, rgba(0, 0, 0, .06) 12.500%, rgba(0, 0, 0, .15) 34.500%, rgba(0, 0, 0, .23) 56.500%, rgba(0, 0, 0, .28) 71%, rgba(0, 0, 0, .325) 86%, rgba(0, 0, 0, .36)); }
.cursor { position: absolute; left: 528px; top: 312px; z-index: 4; }
.vtitle { position: absolute; z-index: 5; left: -85px; top: -18px; font: 53.500px/62px Roboto, sans-serif; color: #eee; white-space: nowrap; text-shadow: 0 0 4px rgba(0, 0, 0, .6); transform-origin: 0 50%; }
.vbtns { position: absolute; z-index: 5; left: 2534px; top: 0; }
.progress { position: absolute; z-index: 5; left: 0; bottom: 13px; width: 2710px; height: 10px; display: flex; background: rgba(255, 255, 255, .2); }
.played { width: 474px; background: #f00; }
.loaded { width: 352px; background: rgba(255, 255, 255, .4); }
.caption { position: absolute; z-index: 5; left: 489px; top: 1394px; font: 72px/85px Roboto, sans-serif; color: #fff; white-space: nowrap; }
.caption div { height: 85px; padding-left: 18px; }
.caption span { display: inline-block; transform-origin: 0 50%; }
.c1 { width: 1232px; background: #2c2c2c; }
.c2 { width: 1227px; background: #292929; }
.mark { position: absolute; z-index: 6; border: 2px solid #f00; }
.m1 { left: 448px; top: 296px; width: 745px; height: 60px; }
.m2 { left: 1524px; top: 1475px; width: 207px; height: 75px; }
</style>
